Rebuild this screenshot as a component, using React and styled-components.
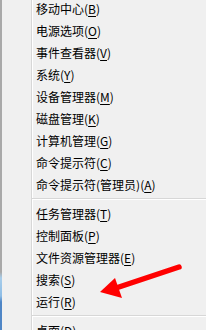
import React from "react";
import styled, { createGlobalStyle } from "styled-components";

const GlobalStyle = createGlobalStyle`
  html, body {
    margin: 0;
    padding: 0;
    background: #f0f0f0;
    overflow: hidden;
  }
`;

const groups = [
  [
    ["移动中心", "B"],
    ["电源选项", "O"],
    ["事件查看器", "V"],
    ["系统", "Y"],
    ["设备管理器", "M"],
    ["磁盘管理", "K"],
    ["计算机管理", "G"],
    ["命令提示符", "C"],
    ["命令提示符(管理员)", "A"],
  ],
  [
    ["任务管理器", "T"],
    ["控制面板", "P"],
    ["文件资源管理器", "E"],
    ["搜索", "S"],
    ["运行", "R"],
  ],
  [["桌面", "D"]],
];

function App() {
  return (
    <>
      <GlobalStyle />
      <Menu>
        <LeftEdge />
        <Gutter />
        <Items>
          {groups.map((group, gi) => (
            <React.Fragment key={gi}>
              {gi > 0 && <Separator />}
              {group.map(([label, key]) => (
                <Item key={label}>
                  {label}(<Key>{key}</Key>)
                </Item>
              ))}
            </React.Fragment>
          ))}
        </Items>
        <Arrow width="90" height="40" viewBox="0 0 90 40">
          <line x1="83" y1="6" x2="20" y2="27" stroke="#ff0000" strokeWidth="5.5" strokeLinecap="round" />
          <polygon points="4,31 19,17 26,37" fill="#ff0000" />
        </Arrow>
      </Menu>
    </>
  );
}

const Menu = styled.div`
  position: relative;
  display: flex;
  height: 330px;
  overflow: hidden;
  background: #f0f0f0;
  font-family: "Noto Sans CJK SC", "Microsoft YaHei", sans-serif;
  font-size: 12px;
  color: #000;
`;

const LeftEdge = styled.div`
  width: 2px;
  flex: none;
  background: linear-gradient(
    to bottom,
    #a9a9a9 0,
    #a9a9a9 272px,
    #a8cdea 278px,
    #8ebde6 296px,
    #4f86c6 302px,
    #4f86c6 100%
  );
`;

const Gutter = styled.div`
  width: 29px;
  flex: none;
  border-right: 1px solid #d7d7d7;
  box-shadow: 1px 0 0 #ffffff;
`;

const Items = styled.div`
  flex: 1;
  display: flex;
  flex-direction: column;
  margin-top: -2px;
  margin-left: 1px;
`;

const Item = styled.div`
  height: 22px;
  line-height: 22px;
  padding-left: 3px;
  white-space: nowrap;
`;

const Key = styled.span`
  text-decoration: underline;
  text-underline-offset: 2px;
`;

const Separator = styled.div`
  height: 7px;
  flex: none;
  margin-left: -1px;
  &::after {
    content: "";
    display: block;
    margin-top: 2px;
    height: 1px;
    background: #d7d7d7;
    box-shadow: 0 1px 0 #ffffff;
  }
`;

const Arrow = styled.svg`
  position: absolute;
  left: 96px;
  top: 261px;
`;

export default App;
